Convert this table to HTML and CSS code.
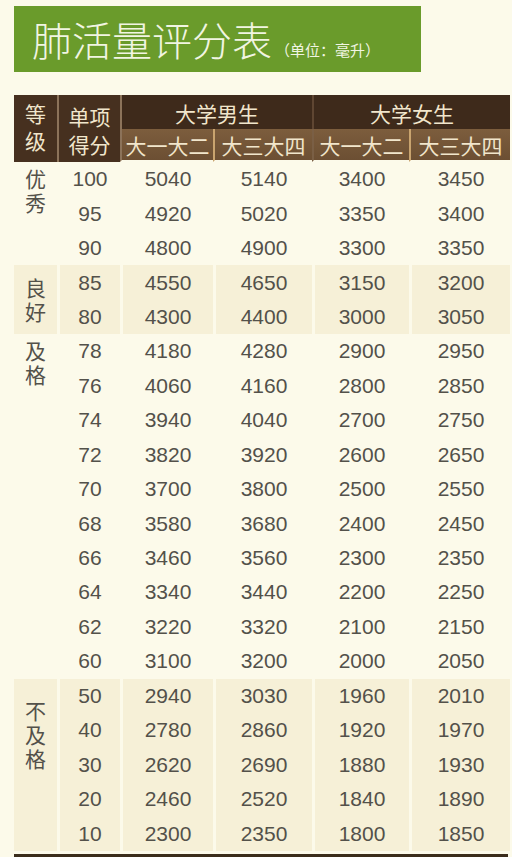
FILE: index.html
```html
<!DOCTYPE html>
<html lang="zh-CN">
<head>
<meta charset="utf-8">
<title>肺活量评分表</title>
<link rel="stylesheet" href="styles.css">
</head>
<body>
<div class="page">
  <div class="title">
    <span class="title-main">肺活量评分表</span><span class="title-unit">（单位：毫升）</span>
  </div>
  <table class="score">
    <colgroup>
      <col class="c-lv"><col class="c-pt"><col class="c-m1"><col class="c-m2"><col class="c-f1"><col class="c-f2">
    </colgroup>
    <thead>
      <tr class="h1">
        <th rowspan="2" class="h-lv"><div class="stack">等级</div></th>
        <th rowspan="2" class="h-pt"><div class="pt-line">单项</div><div class="pt-line">得分</div></th>
        <th colspan="2" class="h-grp">大学男生</th>
        <th colspan="2" class="h-grp h-grp2">大学女生</th>
      </tr>
      <tr class="h2">
        <th class="h-sub h-sub1">大一大二</th>
        <th class="h-sub">大三大四</th>
        <th class="h-sub h-sub1 h-sub-f">大一大二</th>
        <th class="h-sub">大三大四</th>
      </tr>
    </thead>
    <tbody class="g-light">
      <tr><td rowspan="3" class="lv lv-a"><div class="stack">优秀</div></td><td>100</td><td>5040</td><td>5140</td><td>3400</td><td>3450</td></tr>
      <tr><td>95</td><td>4920</td><td>5020</td><td>3350</td><td>3400</td></tr>
      <tr><td>90</td><td>4800</td><td>4900</td><td>3300</td><td>3350</td></tr>
    </tbody>
    <tbody class="g-shade">
      <tr><td rowspan="2" class="lv lv-b"><div class="stack">良好</div></td><td>85</td><td>4550</td><td>4650</td><td>3150</td><td>3200</td></tr>
      <tr><td>80</td><td>4300</td><td>4400</td><td>3000</td><td>3050</td></tr>
    </tbody>
    <tbody class="g-light">
      <tr><td rowspan="10" class="lv lv-a"><div class="stack">及格</div></td><td>78</td><td>4180</td><td>4280</td><td>2900</td><td>2950</td></tr>
      <tr><td>76</td><td>4060</td><td>4160</td><td>2800</td><td>2850</td></tr>
      <tr><td>74</td><td>3940</td><td>4040</td><td>2700</td><td>2750</td></tr>
      <tr><td>72</td><td>3820</td><td>3920</td><td>2600</td><td>2650</td></tr>
      <tr><td>70</td><td>3700</td><td>3800</td><td>2500</td><td>2550</td></tr>
      <tr><td>68</td><td>3580</td><td>3680</td><td>2400</td><td>2450</td></tr>
      <tr><td>66</td><td>3460</td><td>3560</td><td>2300</td><td>2350</td></tr>
      <tr><td>64</td><td>3340</td><td>3440</td><td>2200</td><td>2250</td></tr>
      <tr><td>62</td><td>3220</td><td>3320</td><td>2100</td><td>2150</td></tr>
      <tr><td>60</td><td>3100</td><td>3200</td><td>2000</td><td>2050</td></tr>
    </tbody>
    <tbody class="g-shade">
      <tr><td rowspan="5" class="lv lv-c"><div class="stack">不及格</div></td><td>50</td><td>2940</td><td>3030</td><td>1960</td><td>2010</td></tr>
      <tr><td>40</td><td>2780</td><td>2860</td><td>1920</td><td>1970</td></tr>
      <tr><td>30</td><td>2620</td><td>2690</td><td>1880</td><td>1930</td></tr>
      <tr><td>20</td><td>2460</td><td>2520</td><td>1840</td><td>1890</td></tr>
      <tr><td>10</td><td>2300</td><td>2350</td><td>1800</td><td>1850</td></tr>
    </tbody>
  </table>
  <div class="bottom-bar"></div>
</div>
</body>
</html>
```

FILE: styles.css
```css
html, body {
  margin: 0;
  padding: 0;
  background: #fcfaea;
}
body {
  font-family: "Liberation Sans", "Noto Sans CJK SC", sans-serif;
  color: #53514a;
}
.page {
  padding: 6px 2px 0 14px;
  width: 496px;
}
.title {
  width: 407px;
  height: 66px;
  background: #6a9b2b;
  box-sizing: border-box;
  padding: 10px 0 0 18px;
  display: flex;
  align-items: baseline;
  font-family: "Noto Sans CJK SC", sans-serif;
  color: #f1f5e2;
  white-space: nowrap;
}
.title-main {
  font-size: 40px;
  line-height: 46px;
  font-weight: 300;
}
.title-unit {
  font-size: 15px;
  line-height: 20px;
  margin-left: 3px;
}
.score {
  margin-top: 23px;
  width: 496px;
  table-layout: fixed;
  border-collapse: separate;
  border-spacing: 0;
}
.c-lv { width: 43px; }
.c-pt { width: 63px; }
.c-m1 { width: 93px; }
.c-m2 { width: 99px; }
.c-f1 { width: 97px; }
.c-f2 { width: 101px; }

.stack {
  writing-mode: vertical-rl;
  text-orientation: upright;
  letter-spacing: 3px;
  line-height: 24px;
  margin: 0 auto;
  font-family: "Noto Sans CJK SC", sans-serif;
}

th {
  font-family: "Noto Sans CJK SC", sans-serif;
  font-weight: normal;
  font-size: 21px;
  color: #f1e6cc;
  padding: 0;
  text-align: center;
}
.h1 th {
  height: 32px;
  line-height: 27px;
  background: #3e2a1b;
}
.h1 .h-lv, .h1 .h-pt {
  background: #46301f;
}
.h1 .h-lv .stack {
  letter-spacing: 6px;
  margin-top: 4px;
}
.pt-line {
  line-height: 30px;
  height: 28px;
  overflow: visible;
}
.h-pt {
  border-left: 2px solid #8c735a;
}
.h1 .h-grp {
  border-left: 2px solid #8c735a;
  padding-top: 2px;
  vertical-align: middle;
}
.h1 .h-grp2 {
  border-left: 2px solid #5f4632;
}
.h2 th {
  height: 31px;
  line-height: 28px;
  background: linear-gradient(#7c5d3d, #6c4f33);
  border-left: 2px solid #c9a46f;
}
.h2 .h-sub1 {
  border-left: 2px solid #8c735a;
}
.h2 .h-sub-f {
  border-left: 2px solid #7a5f45;
}

td {
  height: 34.45px;
  padding: 0;
  text-align: center;
  font-size: 21px;
  line-height: 24px;
  border-left: 3px solid #fcfaea;
}
td.lv {
  border-left: 0;
  vertical-align: top;
  font-size: 21px;
}
.g-shade td {
  background: #f6f0d7;
}
.g-light td {
  background: #fcfaea;
}
.lv-a { padding-top: 7px; }
.lv-b { padding-top: 13px; }
.lv-c { padding-top: 22px; }
thead tr:last-child th {
  border-bottom: 2px solid #fcfaea;
}
.bottom-bar {
  margin-top: 3px;
  height: 6px;
  width: 494px;
  background: #3b2d1c;
}
```
